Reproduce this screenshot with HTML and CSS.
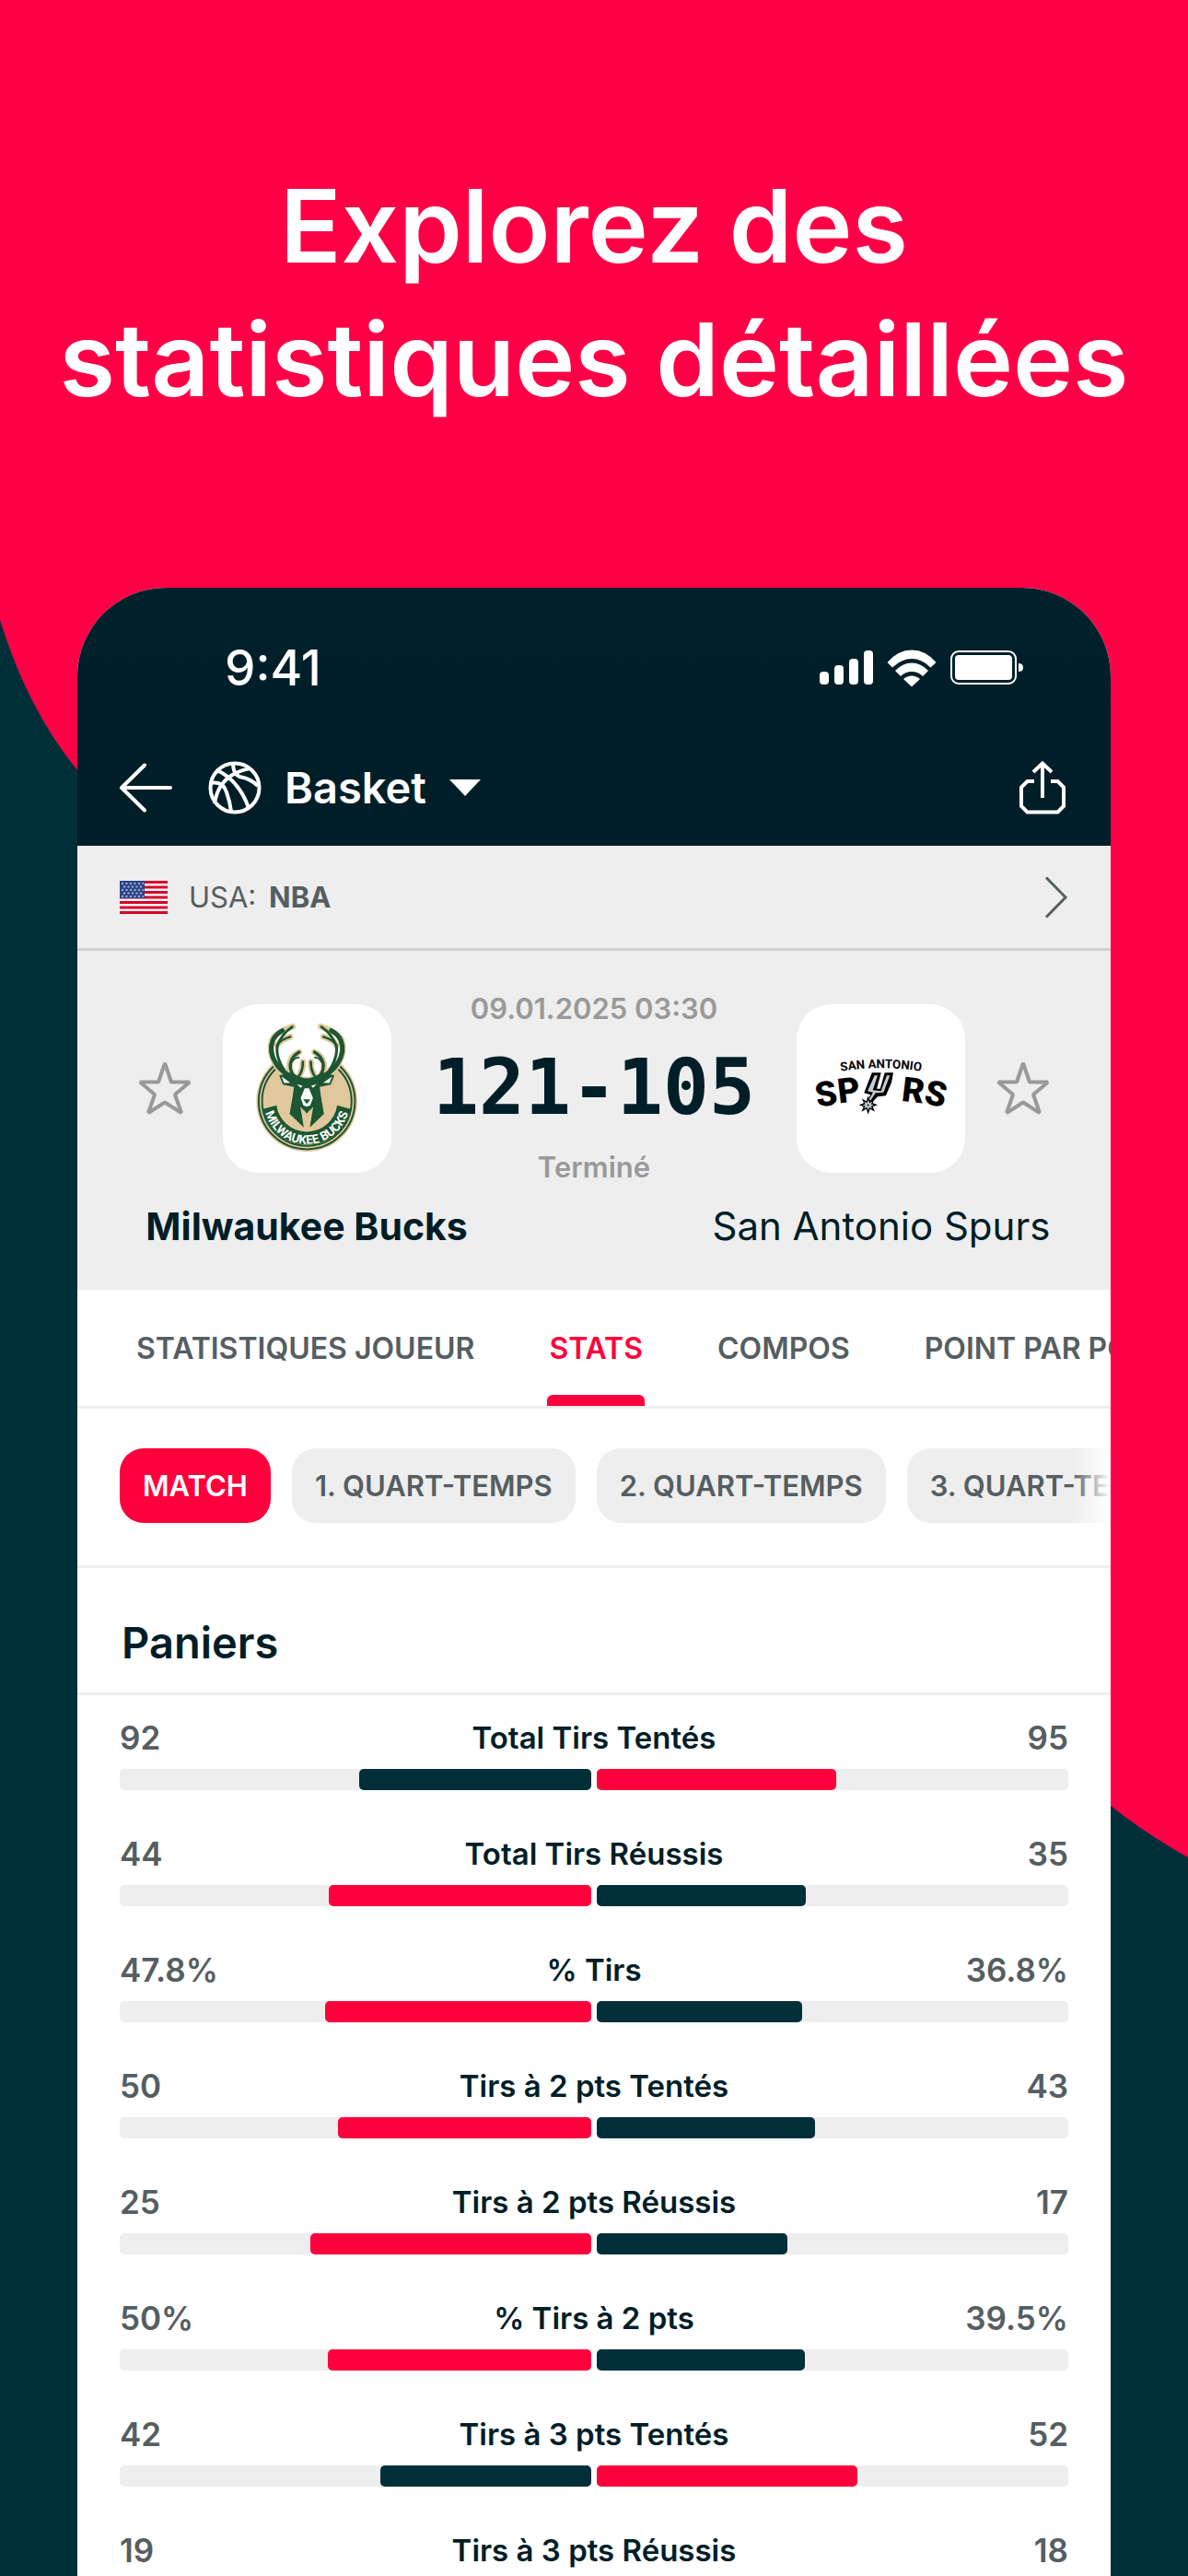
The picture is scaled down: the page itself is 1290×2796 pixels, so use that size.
FILE: index.html
```html
<!DOCTYPE html>
<html lang="fr">
<head>
<meta charset="utf-8">
<meta name="viewport" content="width=device-width, initial-scale=1">
<title>Explorez des statistiques détaillées</title>
<link rel="stylesheet" href="styles.css">
</head>
<body>
<div class="page">
  <svg class="backdrop" viewBox="0 0 1290 2796" preserveAspectRatio="none" aria-hidden="true">
    <path d="M0 0H1290V2016Q1245 1991 1206 1960L84 836Q30 770 0 673Z" fill="#ff0046"/>
  </svg>

  <h1 class="headline">Explorez des<br>statistiques détaillées</h1>

  <main class="phone">
    <header class="top">
      <div class="status">
        <span class="clock">9:41</span>
        <div class="status-icons">
          <svg width="58" height="38" viewBox="0 0 58 38" fill="#fff" aria-hidden="true">
            <rect x="0" y="23" width="10" height="14" rx="4"/>
            <rect x="16" y="16" width="10" height="21" rx="4"/>
            <rect x="32" y="9" width="10" height="28" rx="4"/>
            <rect x="48" y="0" width="10" height="37" rx="4"/>
          </svg>
          <svg width="54" height="40" viewBox="0 0 54 40" fill="#fff" aria-hidden="true">
            <path d="M0.500 14Q12 0.500 27 0.500T53.500 14L47.500 19.500Q38 10 27 10T6 19.500Z"/>
            <path d="M9 23Q17 14.500 27 14.500T45 23L39 29Q34 24 27 24T15 29Z"/>
            <path d="M18 32Q22 28.500 27 28.500T36 32L27 40.500Z"/>
          </svg>
          <svg width="80" height="38" viewBox="0 0 80 38" aria-hidden="true">
            <rect x="1" y="1" width="70" height="35" rx="8" fill="none" stroke="#fff" stroke-width="2"/>
            <rect x="5" y="5" width="62" height="27" rx="4" fill="#fff"/>
            <path d="M74 14Q79 14 79 18.500T74 23Z" fill="#fff"/>
          </svg>
        </div>
      </div>
      <nav class="appbar">
        <button class="icon-button" type="button" aria-label="Retour">
          <svg width="58" height="54" viewBox="0 0 58 54" fill="none" stroke="#fff" stroke-width="4" stroke-linecap="round" stroke-linejoin="round" aria-hidden="true">
            <path d="M28 2.500L3 27L28 51.500M3 27H56"/>
          </svg>
        </button>
        <button class="sport" type="button">
          <svg width="58" height="58" viewBox="0 0 58 58" fill="none" stroke="#fff" stroke-width="4" aria-hidden="true">
            <circle cx="29" cy="29" r="26.500"/>
            <path d="M7 46Q12 14 46 8M2 24Q16 21 20 34Q24 45 25 55M10 10Q34 22 44 51M27 2Q27 14 34 17Q46 19 54 27"/>
          </svg>
          <span>Basket</span>
          <svg class="caret" width="34" height="18" viewBox="0 0 34 18" fill="#fff" aria-hidden="true"><path d="M0 0H34L17 18Z"/></svg>
        </button>
        <button class="icon-button share" type="button" aria-label="Partager">
          <svg width="50" height="58" viewBox="0 0 50 58" fill="none" stroke="#fff" stroke-width="4" aria-hidden="true">
            <path d="M25 40V3M15 12L25 2.500L35 12M16 22H8.500L2 28.500V49L8.500 55.500H41.500L48 49V28.500L41.500 22H34"/>
          </svg>
        </button>
      </nav>
    </header>

    <a class="league" href="#nba">
      <svg width="52" height="36" viewBox="0 0 52 36" aria-hidden="true">
        <rect width="52" height="36" fill="#fff"/>
        <path d="M0 1.500H52M0 7H52M0 12.500H52M0 18H52M0 23.500H52M0 29H52M0 34.500H52" stroke="#d80027" stroke-width="3"/>
        <rect width="27" height="19" fill="#2e4589"/>
        <path d="M2 3H26M4 6.500H26M2 10H26M4 13.500H26M2 17H26" stroke="#c7cde0" stroke-width="1.500" stroke-dasharray="2 2.500"/>
      </svg>
      <span class="league-name">USA: <strong>NBA</strong></span>
      <svg class="chevron" width="26" height="46" viewBox="0 0 26 46" fill="none" stroke="#555e61" stroke-width="3" aria-hidden="true"><path d="M2 1.500L23 23L2 44.500"/></svg>
    </a>

    <section class="match">
      <div class="match-row">
        <button class="icon-button" type="button" aria-label="Suivre Milwaukee Bucks">
          <svg width="58" height="58" viewBox="0 0 58 58" fill="none" stroke="#999" stroke-width="4" stroke-linejoin="bevel" aria-hidden="true"><path d="M29 2L36 22.500H56L40 36L47 56L29 44.500L11 56L18 36L2 22.500H22Z"/></svg>
        </button>
        <div class="crest">
          <svg viewBox="37 28 548 550" role="img" aria-label="Milwaukee Bucks">
            <defs>
              <path id="bucks-arc" d="M170 344A140 140 0 0 0 450 344"/>
              <g id="antler">
                <path d="M296 276Q236 262 210 222Q184 182 199 146Q208 126 230 114" stroke-width="15"/>
                <path d="M236 244Q204 190 216 158Q230 124 262 102" stroke-width="9"/>
                <path d="M212 162Q226 142 256 134" stroke-width="7"/>
                <path d="M270 268Q248 236 260 210Q266 196 285 184" stroke-width="10"/>
                <path d="M262 216Q270 202 284 202" stroke-width="5"/>
                <path d="M282 266Q298 244 297 216" stroke-width="8"/>
              </g>
            </defs>
            <circle cx="310" cy="344" r="165" fill="#e1c89c"/>
            <circle cx="310" cy="344" r="157" fill="none" stroke="#1c5632" stroke-width="6"/>
            <circle cx="310" cy="344" r="146" fill="none" stroke="#1c5632" stroke-width="6"/>
            <path d="M205 200Q310 330 415 200L380 90H240Z" fill="#fff"/>
            <g fill="none" stroke="#e1c89c" stroke-linecap="round">
              <path d="M290 278Q228 262 207 222Q184 182 197 144Q207 120 264 101M270 268Q244 236 260 206Q268 192 285 184M282 266Q298 244 297 216M212 162Q226 142 256 134" stroke-width="20"/>
              <path d="M330 278Q392 262 413 222Q436 182 423 144Q413 120 356 101M350 268Q376 236 360 206Q352 192 335 184M338 266Q322 244 323 216M408 162Q394 142 364 134" stroke-width="20"/>
            </g>
            <g fill="none" stroke="#1c5632" stroke-linecap="round">
              <use href="#antler"/>
              <use href="#antler" transform="translate(620 0) scale(-1 1)"/>
            </g>
            <path d="M211 358A100 100 0 0 0 409 358L453 370A146 146 0 0 1 167 370Z" fill="#1c5632"/>
            <path d="M262 250Q310 290 358 250L400 260L388 290L352 298L356 328L366 386L320 430V372L310 386L300 372V430L254 386L264 328L268 298L232 290L220 260Z" fill="#1c5632"/>
            <path d="M300 428L289 362L310 386L331 362L320 428Z" fill="#e1c89c"/>
            <path d="M228 264L256 284L236 285ZM392 264L364 284L384 285ZM278 289L296 294L290 301ZM342 289L324 294L330 301Z" fill="#fff"/>
            <path d="M303 302H317L330 334L321 358L310 362L299 358L290 334Z" fill="#fff"/>
            <path d="M298 338H322L314 348V351H306V348Z" fill="#1c5632"/>
            <text class="bucks-text" text-anchor="middle"><textPath href="#bucks-arc" startOffset="50%">MILWAUKEE BUCKS</textPath></text>
          </svg>
        </div>
        <div class="score-block">
          <time class="note" datetime="2025-01-09T03:30">09.01.2025 03:30</time>
          <span class="score">121-105</span>
          <span class="note">Terminé</span>
        </div>
        <div class="crest">
          <svg viewBox="45 28 549 550" role="img" aria-label="San Antonio Spurs">
            <defs>
              <path id="spurs-top" d="M170 250Q320 222 470 250"/>
              <path id="spurs-base" d="M114 366Q320 316 526 366"/>
            </defs>
            <text class="spurs-small" text-anchor="middle"><textPath href="#spurs-top" startOffset="50%">SAN ANTONIO</textPath></text>
            <text class="spurs-big"><textPath href="#spurs-base">SP</textPath></text>
            <text class="spurs-big" text-anchor="end"><textPath href="#spurs-base" startOffset="100%">RS</textPath></text>
            <path d="M292 254H317L303 306H319L334 254H357L352 282L334 324L308 327L290 345L280 338L289 322L268 316Z" fill="#000" stroke="#000" stroke-width="5"/>
            <path d="M299 260H309L293 308L320 311L339 260H349L328 316L302 317L286 342L281 338L294 316L276 311Z" fill="#c4ced4"/>
            <path d="M278 327L284 344L299 336L293 350L309 356L293 362L300 378L284 370L278 387L272 370L256 379L263 362L248 356L264 350L257 335L272 344Z" fill="#000"/>
            <path d="M278 340L282 350L292 345L287 354L297 357L287 360L291 369L282 364L278 374L274 364L264 369L269 360L259 357L269 354L264 345L274 350Z" fill="#c4ced4"/>
            <circle cx="278" cy="357" r="3" fill="#000"/>
          </svg>
        </div>
        <button class="icon-button" type="button" aria-label="Suivre San Antonio Spurs">
          <svg width="58" height="58" viewBox="0 0 58 58" fill="none" stroke="#999" stroke-width="4" stroke-linejoin="bevel" aria-hidden="true"><path d="M29 2L36 22.500H56L40 36L47 56L29 44.500L11 56L18 36L2 22.500H22Z"/></svg>
        </button>
      </div>
      <div class="names">
        <span class="name winner">Milwaukee Bucks</span>
        <span class="name">San Antonio Spurs</span>
      </div>
    </section>

    <nav class="tabs">
      <button class="tab" type="button">STATISTIQUES JOUEUR</button>
      <button class="tab active" type="button">STATS</button>
      <button class="tab" type="button">COMPOS</button>
      <button class="tab" type="button">POINT PAR POINT</button>
    </nav>

    <nav class="chips">
      <button class="chip active" type="button">MATCH</button>
      <button class="chip" type="button">1. QUART-TEMPS</button>
      <button class="chip" type="button">2. QUART-TEMPS</button>
      <button class="chip" type="button">3. QUART-TEMPS</button>
    </nav>

    <section>
      <h2 class="section-title">Paniers</h2>
      <ul class="stats">
        <li class="stat">
          <div class="stat-line"><span class="value">92</span><span class="label">Total Tirs Tentés</span><span class="value">95</span></div>
          <div class="bars"><div class="bar home"><div class="fill" style="width:49.2%"></div></div><div class="bar"><div class="fill best" style="width:50.8%"></div></div></div>
        </li>
        <li class="stat">
          <div class="stat-line"><span class="value">44</span><span class="label">Total Tirs Réussis</span><span class="value">35</span></div>
          <div class="bars"><div class="bar home"><div class="fill best" style="width:55.7%"></div></div><div class="bar"><div class="fill" style="width:44.3%"></div></div></div>
        </li>
        <li class="stat">
          <div class="stat-line"><span class="value">47.8%</span><span class="label">% Tirs</span><span class="value">36.8%</span></div>
          <div class="bars"><div class="bar home"><div class="fill best" style="width:56.5%"></div></div><div class="bar"><div class="fill" style="width:43.5%"></div></div></div>
        </li>
        <li class="stat">
          <div class="stat-line"><span class="value">50</span><span class="label">Tirs à 2 pts Tentés</span><span class="value">43</span></div>
          <div class="bars"><div class="bar home"><div class="fill best" style="width:53.8%"></div></div><div class="bar"><div class="fill" style="width:46.2%"></div></div></div>
        </li>
        <li class="stat">
          <div class="stat-line"><span class="value">25</span><span class="label">Tirs à 2 pts Réussis</span><span class="value">17</span></div>
          <div class="bars"><div class="bar home"><div class="fill best" style="width:59.5%"></div></div><div class="bar"><div class="fill" style="width:40.5%"></div></div></div>
        </li>
        <li class="stat">
          <div class="stat-line"><span class="value">50%</span><span class="label">% Tirs à 2 pts</span><span class="value">39.5%</span></div>
          <div class="bars"><div class="bar home"><div class="fill best" style="width:55.9%"></div></div><div class="bar"><div class="fill" style="width:44.1%"></div></div></div>
        </li>
        <li class="stat">
          <div class="stat-line"><span class="value">42</span><span class="label">Tirs à 3 pts Tentés</span><span class="value">52</span></div>
          <div class="bars"><div class="bar home"><div class="fill" style="width:44.7%"></div></div><div class="bar"><div class="fill best" style="width:55.3%"></div></div></div>
        </li>
        <li class="stat">
          <div class="stat-line"><span class="value">19</span><span class="label">Tirs à 3 pts Réussis</span><span class="value">18</span></div>
          <div class="bars"><div class="bar home"><div class="fill best" style="width:51.4%"></div></div><div class="bar"><div class="fill" style="width:48.6%"></div></div></div>
        </li>
      </ul>
    </section>
  </main>
</div>
</body>
</html>
```
FILE: styles.css
```css
:root {
  --red: #ff0046;
  --red-ui: #ff003c;
  --navy: #001e28;
  --teal: #002f3a;
  --grey: #555e61;
  --grey-light: #999;
  --surface: #eee;
}

* {
  box-sizing: border-box;
}

body {
  margin: 0;
  font-family: Inter, "Liberation Sans", sans-serif;
  font-weight: 600;
  color: var(--navy);
}

button {
  margin: 0;
  padding: 0;
  border: 0;
  background: none;
  font: inherit;
  color: inherit;
  white-space: nowrap;
  flex: none;
}

svg {
  display: block;
  flex: none;
}

.page {
  position: relative;
  height: 100vh;
  overflow: hidden;
  background: var(--teal);
  padding: 173px 84px 0;
}

.backdrop {
  position: absolute;
  inset: 0;
  width: 100%;
  height: 100%;
}

.headline {
  position: relative;
  margin: 0 -84px 175px;
  font-size: 110px;
  line-height: 145px;
  font-weight: 600;
  text-align: center;
  color: #fff;
}

.phone {
  position: relative;
  overflow: hidden;
  border-radius: 96px 96px 0 0;
  background: #fff;
}

.top {
  background: linear-gradient(#00222b, var(--navy) 45%);
  color: #fff;
}

.status {
  display: flex;
  align-items: center;
  justify-content: space-between;
  height: 155px;
  padding: 18px 94px 0 160px;
}

.clock {
  font-size: 53px;
  line-height: 60px;
  font-weight: 500;
}

.status-icons {
  display: flex;
  align-items: center;
  gap: 15px;
}

.appbar {
  display: flex;
  align-items: center;
  height: 125px;
  padding: 0 49px 2px 45px;
}

.sport {
  display: flex;
  align-items: center;
  margin-left: 39px;
  gap: 25px;
  font-size: 47px;
  line-height: 56px;
}

.share {
  margin-left: auto;
}

.league {
  display: flex;
  align-items: center;
  height: 114px;
  padding: 0 46px;
  border-bottom: 3px solid #d2d2d2;
  background: var(--surface);
  color: var(--grey);
  font-size: 31px;
  line-height: 40px;
  font-weight: 400;
  text-decoration: none;
}

.league-name {
  margin-left: 23px;
}

.league-name strong {
  margin-left: 5px;
  font-weight: 700;
}

.chevron {
  margin-left: auto;
}

.match {
  padding: 43px 0;
  background: var(--surface);
}

.match-row {
  display: flex;
  align-items: center;
  gap: 34px;
  padding: 0 66px;
}

.crest {
  flex: none;
  width: 183px;
  height: 183px;
  border-radius: 38px;
  overflow: hidden;
  background: #fff;
}

.crest svg {
  width: 100%;
  height: 100%;
}

.bucks-text {
  font: 700 40px Roboto, sans-serif;
  fill: #fff;
}

.spurs-small {
  font: 700 40px Roboto, sans-serif;
}

.spurs-big {
  font: 900 112px Roboto, sans-serif;
}

.score-block {
  flex: 1;
  display: flex;
  flex-direction: column;
  align-items: center;
  gap: 16px;
  min-width: 0;
  margin: 0 -34px;
}

.note {
  font-size: 31px;
  line-height: 40px;
  color: var(--grey-light);
}

.score {
  font: 700 83px/100px "DejaVu Sans Mono", monospace;
}

.names {
  display: flex;
  justify-content: space-between;
  margin-top: 19px;
}

.name {
  flex: 0 0 44.4%;
  margin-bottom: 1px;
  font-size: 42px;
  line-height: 50px;
  font-weight: 400;
  text-align: center;
}

.winner {
  font-size: 41px;
  font-weight: 700;
}

.tabs {
  display: flex;
  gap: 77px;
  padding: 0 62px;
  border-bottom: 3px solid var(--surface);
  overflow: hidden;
}

.tab {
  position: relative;
  height: 126px;
  padding: 2px 2px 0;
  font-size: 32px;
  line-height: 40px;
  color: var(--grey);
}

.tab.active {
  color: var(--red-ui);
}

.tab.active::after {
  content: "";
  position: absolute;
  left: 0;
  right: 0;
  bottom: 0;
  height: 12px;
  border-radius: 6px 6px 0 0;
  background: var(--red-ui);
}

.chips {
  position: relative;
  display: flex;
  gap: 23px;
  padding: 43px 46px 46px;
  border-bottom: 3px solid var(--surface);
  overflow: hidden;
}

.chips::after {
  content: "";
  position: absolute;
  top: 0;
  right: 0;
  bottom: 0;
  width: 42px;
  background: linear-gradient(to right, rgba(255, 255, 255, 0), #fff);
}

.chip {
  height: 81px;
  padding: 0 25px;
  border-radius: 26px;
  background: var(--surface);
  font-size: 31px;
  line-height: 40px;
  color: var(--grey);
}

.chip.active {
  background: var(--red-ui);
  color: #fff;
}

.section-title {
  margin: 0;
  padding: 51px 48px 24px;
  border-bottom: 3px solid var(--surface);
  font-size: 47px;
  line-height: 60px;
  font-weight: 600;
}

.stats {
  margin: 0;
  padding: 0 46px;
  list-style: none;
}

.stat {
  padding: 24px 0 23px;
}

.stat-line {
  display: grid;
  grid-template-columns: 1fr auto 1fr;
  align-items: center;
  margin-bottom: 12px;
  line-height: 44px;
}

.value {
  font-size: 35px;
  color: var(--grey);
}

.value:last-child {
  text-align: right;
}

.label {
  font-size: 33px;
}

.bars {
  display: grid;
  grid-template-columns: 1fr 1fr;
  gap: 6px;
}

.bar {
  display: flex;
  height: 23px;
  border-radius: 5px;
  background: var(--surface);
}

.bar.home {
  justify-content: flex-end;
}

.fill {
  border-radius: 5px;
  background: var(--teal);
}

.fill.best {
  background: var(--red-ui);
}
```
